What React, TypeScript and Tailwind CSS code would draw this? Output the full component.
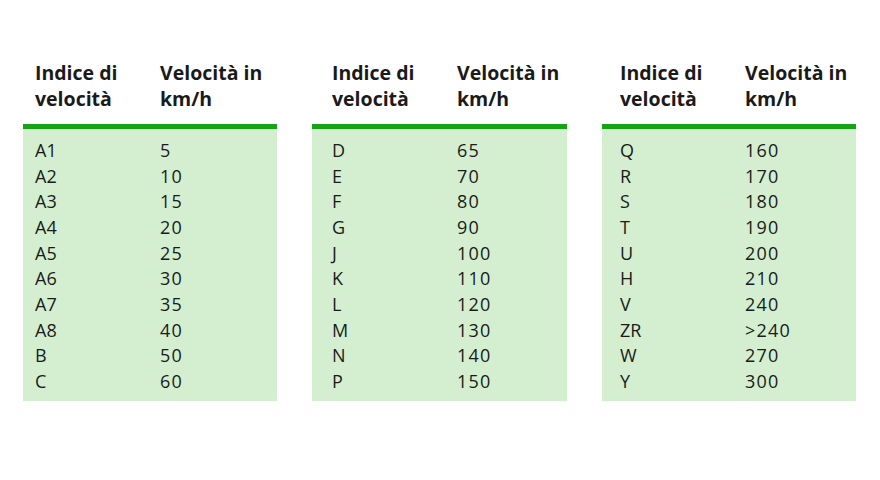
import React from "react";

type Row = [string, string];

const tables: { rows: Row[]; pad: string; width: string }[] = [
  {
    pad: "pl-[12px]",
    width: "w-[254px]",
    rows: [
      ["A1", "5"],
      ["A2", "10"],
      ["A3", "15"],
      ["A4", "20"],
      ["A5", "25"],
      ["A6", "30"],
      ["A7", "35"],
      ["A8", "40"],
      ["B", "50"],
      ["C", "60"],
    ],
  },
  {
    pad: "pl-[20px]",
    width: "w-[255px]",
    rows: [
      ["D", "65"],
      ["E", "70"],
      ["F", "80"],
      ["G", "90"],
      ["J", "100"],
      ["K", "110"],
      ["L", "120"],
      ["M", "130"],
      ["N", "140"],
      ["P", "150"],
    ],
  },
  {
    pad: "pl-[18px]",
    width: "w-[254px]",
    rows: [
      ["Q", "160"],
      ["R", "170"],
      ["S", "180"],
      ["T", "190"],
      ["U", "200"],
      ["H", "210"],
      ["V", "240"],
      ["ZR", ">240"],
      ["W", "270"],
      ["Y", "300"],
    ],
  },
];

function SpeedTable({
  rows,
  pad,
  width,
}: {
  rows: Row[];
  pad: string;
  width: string;
}) {
  return (
    <div className={`${width} flex flex-col`}>
      {/* intestazione */}
      <div className={`flex ${pad} pb-[12px] font-bold text-[19.5px] leading-[26px]`}>
        <div className="w-[125px]">
          Indice di
          <br />
          velocità
        </div>
        <div>
          Velocità in
          <br />
          km/h
        </div>
      </div>
      <div className="h-[5px] bg-[#16a316]" />
      <div className={`bg-[#d3efd0] ${pad} pt-[9px] pb-[6px]`}>
        {rows.map(([idx, speed]) => (
          <div key={idx} className="flex text-[18px] leading-[25.67px]">
            <div className="w-[125px]">{idx}</div>
            <div className="tracking-[1.2px]">{speed}</div>
          </div>
        ))}
      </div>
    </div>
  );
}

export default function App() {
  return (
    <div
      className="w-[880px] h-[480px] bg-white text-[#1a1a1a] pt-[60px] pl-[23px] flex gap-[35px]"
      style={{ fontFamily: '"Open Sans", "Noto Sans", sans-serif' }}
    >
      {tables.map((t, i) => (
        <SpeedTable key={i} rows={t.rows} pad={t.pad} width={t.width} />
      ))}
    </div>
  );
}
